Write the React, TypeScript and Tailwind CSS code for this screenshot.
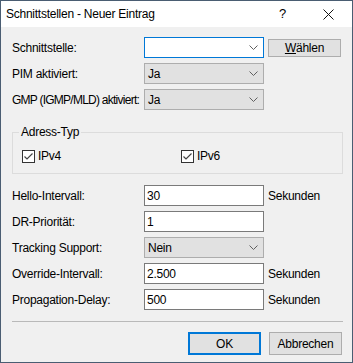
import React from 'react';

const font = {fontFamily: '"Liberation Sans", Arial, sans-serif'};

const Chevron = () => (
    <svg width="9" height="5" viewBox="0 0 9 5" className="shrink-0">
        <path d="M0.5 0.5 L4.5 4.5 L8.5 0.5" fill="none" stroke="#606060" strokeWidth="1"/>
    </svg>
);

const Check = () => (
    <span className="w-[13px] h-[13px] border border-[#333333] bg-white flex items-center justify-center shrink-0">
        <svg width="11" height="11" viewBox="0 0 11 11">
            <path d="M1.5 5.5 L4 8 L9.5 2.5" fill="none" stroke="#444444" strokeWidth="1.2"/>
        </svg>
    </span>
);

const Select = ({value, editable = false}: { value: string; editable?: boolean }) => (
    <div
        className={editable
            ? "w-[120px] h-[21px] border border-[#0078d7] bg-white flex items-center justify-between pl-[3px] pr-[5px]"
            : "w-[120px] h-[21px] border border-[#adadad] bg-[#e1e1e1] flex items-center justify-between pl-[3px] pr-[5px]"}
    >
        <span>{value}</span>
        <Chevron/>
    </div>
);

const TextInput = ({value}: { value: string }) => (
    <div className="w-[120px] h-[21px] border border-[#7a7a7a] bg-white flex items-center pl-[2px]">
        {value}
    </div>
);

const Row = ({label, children, tight = false}: { label: string; children: React.ReactNode; tight?: boolean }) => (
    <div className="flex items-center h-[21px]">
        <span className={tight ? "w-[132px] shrink-0 whitespace-nowrap tracking-[-0.75px]" : "w-[132px] shrink-0 whitespace-nowrap"}>
            {label}
        </span>
        {children}
    </div>
);

export default function App() {
    return (
        <div
            className="w-[353px] h-[363px] border border-[#4a5d72] bg-[#f0f0f0] flex flex-col text-[12px] text-black leading-[14px] tracking-[-0.25px]"
            style={font}
        >
            {/* Title bar */}
            <div className="h-[26px] bg-white flex items-center pl-[5px] shrink-0">
                <span className="flex-1">Schnittstellen - Neuer Eintrag</span>
                <span className="w-[10px] text-[13px] mr-[34px]">?</span>
                <svg width="11" height="11" viewBox="0 0 11 11" className="mr-[18px]">
                    <path d="M0.5 0.5 L10.5 10.5 M10.5 0.5 L0.5 10.5" stroke="#111111" strokeWidth="1"/>
                </svg>
            </div>

            <div className="pl-[11px] pr-[10px] pt-[10px] flex flex-col">
                <div className="flex flex-col gap-[5px]">
                    <Row label="Schnittstelle:">
                        <Select value="" editable/>
                        <button
                            className="ml-[4px] w-[73px] h-[18px] border border-[#adadad] bg-[#e1e1e1] flex items-center justify-center">
                            <span className="underline">W</span>ählen
                        </button>
                    </Row>
                    <Row label="PIM aktiviert:">
                        <Select value="Ja"/>
                    </Row>
                    <Row label="GMP (IGMP/MLD) aktiviert:" tight>
                        <Select value="Ja"/>
                    </Row>
                </div>

                <fieldset className="mt-[15px] mr-[-1px] border border-[#dcdcdc] pb-[10px]">
                    <legend className="ml-[6px] px-[2px]">Adress-Typ</legend>
                    <div className="flex items-center pl-[9px] mt-[10px]">
                        <label className="w-[159px] flex items-center gap-[3px]">
                            <Check/>
                            <span>IPv4</span>
                        </label>
                        <label className="flex items-center gap-[3px]">
                            <Check/>
                            <span>IPv6</span>
                        </label>
                    </div>
                </fieldset>

                <div className="mt-[11px] flex flex-col gap-[5px]">
                    <Row label="Hello-Intervall:">
                        <TextInput value="30"/>
                        <span className="ml-[4px]">Sekunden</span>
                    </Row>
                    <Row label="DR-Priorität:">
                        <TextInput value="1"/>
                    </Row>
                    <Row label="Tracking Support:">
                        <Select value="Nein"/>
                    </Row>
                    <Row label="Override-Intervall:">
                        <TextInput value="2.500"/>
                        <span className="ml-[4px]">Sekunden</span>
                    </Row>
                    <Row label="Propagation-Delay:">
                        <TextInput value="500"/>
                        <span className="ml-[4px]">Sekunden</span>
                    </Row>
                </div>

                <div className="mt-[11px] mr-[-1px] border-t border-[#b9b9b9]"/>

                <div className="mt-[10px] flex justify-end gap-[8px]">
                    <button
                        className="w-[73px] h-[23px] border-2 border-[#0078d7] bg-[#e1e1e1] flex items-center justify-center">
                        OK
                    </button>
                    <button
                        className="w-[73px] h-[23px] border border-[#adadad] bg-[#e1e1e1] flex items-center justify-center">
                        Abbrechen
                    </button>
                </div>
            </div>
        </div>
    );
}
